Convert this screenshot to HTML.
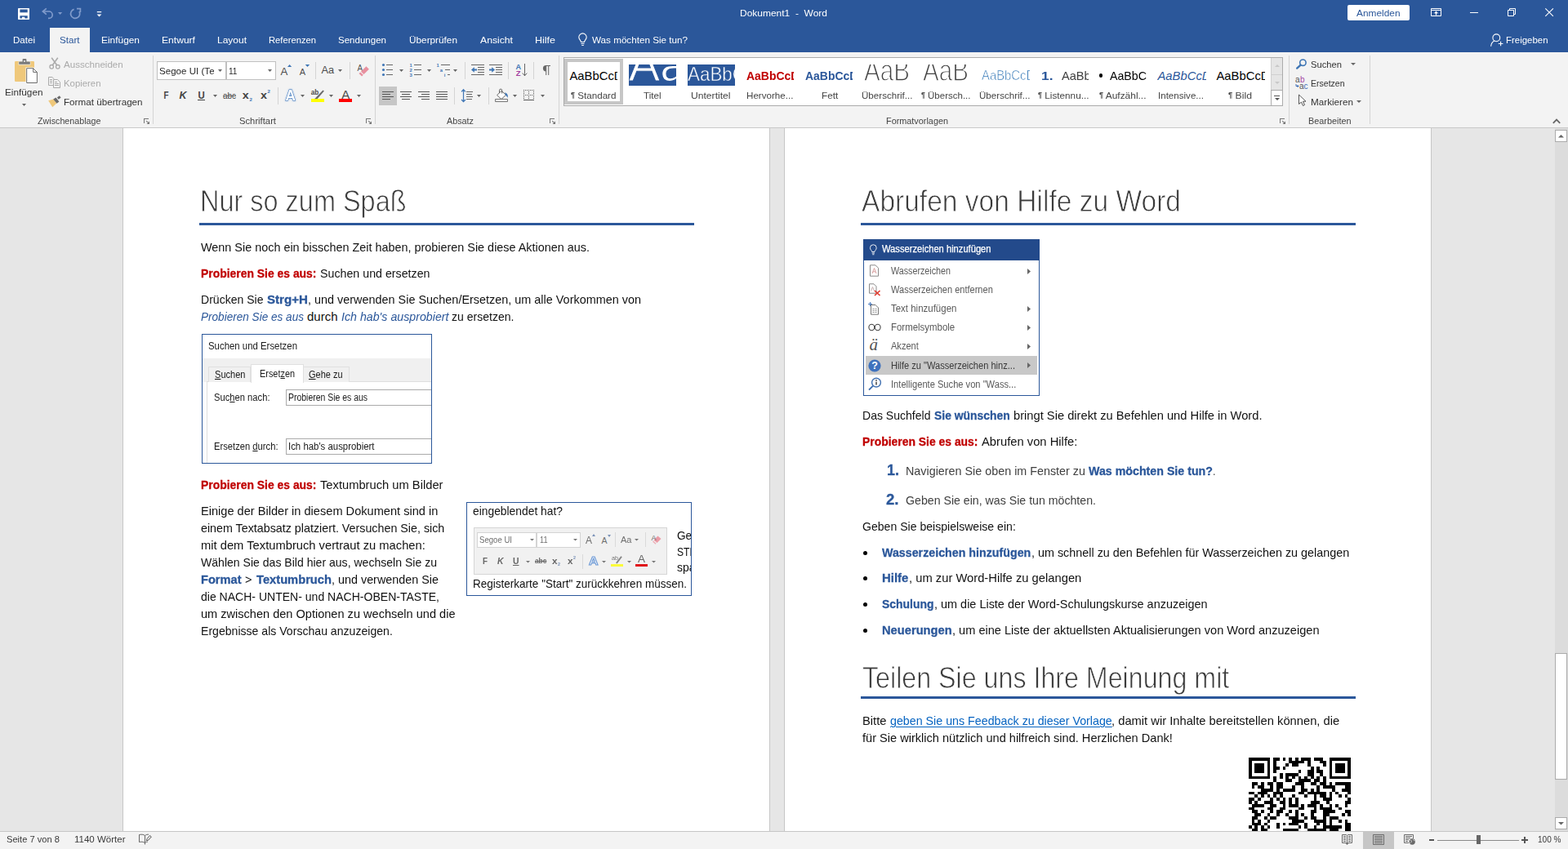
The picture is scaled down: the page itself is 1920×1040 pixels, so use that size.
<!DOCTYPE html>
<html lang="de"><head><meta charset="utf-8"><title>Dokument1 - Word</title>
<style>
html,body{margin:0;padding:0}
body{width:1920px;height:1040px;overflow:hidden;position:relative;background:#E6E6E6;font-family:"Liberation Sans",sans-serif;font-size:12px;color:#444}
.b{position:absolute;box-sizing:border-box}
.t{position:absolute;white-space:nowrap;transform-origin:0 0;color:#444}
.w{color:#fff}
svg{position:absolute;overflow:visible}
.clip{position:absolute;overflow:hidden}
</style></head>
<body>
<div class="b" style="left:0px;top:0px;width:1920px;height:64px;background:#2B579A;"></div>
<div class="b" style="left:61px;top:34px;width:49px;height:30px;background:#F3F3F3;"></div>
<div class="b" style="left:0px;top:64px;width:1920px;height:93px;background:#F3F3F3;border-bottom:1px solid #C9C9C9;"></div>
<svg style="left:0;top:0" width="1920" height="160" viewBox="0 0 1920 160"><rect x="22" y="10" width="14" height="14" rx="0.7" fill="#fff"/><rect x="24.4" y="11.5" width="9.3" height="3.8" fill="#2B579A"/><path d="M24.4 19.3h9.3v3.3h-3.4v-1.9h-3.4v1.9h-2.5z" fill="#2B579A"/><path d="M52.6 14h7.4a4.2 4.2 0 0 1 0 8.4h-1" fill="none" stroke="#809BCB" stroke-width="1.7"/><path d="M56.8 10.4l-4.4 3.6l4.4 3.6" fill="none" stroke="#809BCB" stroke-width="1.7"/><path d="M71 15h5.2l-2.6 3z" fill="#809BCB"/><path d="M90.6 11.4a5.6 5.6 0 1 0 6.4 2.6" fill="none" stroke="#809BCB" stroke-width="1.7"/><path d="M94 10.6h4.4v4.4" fill="none" stroke="#809BCB" stroke-width="1.7"/><path d="M118.8 14h5.4v1.3h-5.4z M118.6 17.4h5.8l-2.9 3z" fill="#fff"/></svg>
<span class="t" style="top:9px;font-size:11.3px;line-height:14px;color:#fff;left:906.00px;transform:scaleX(1.0607);">Dokument1 &nbsp;-&nbsp; Word</span>
<div class="b" style="left:1650px;top:6px;width:76px;height:19px;background:#fff;border-radius:2px;"></div>
<span class="t" style="top:9px;font-size:11.3px;line-height:14px;color:#2B579A;left:1661.00px;transform:scaleX(1.0516);">Anmelden</span>
<svg style="left:0;top:0" width="1920" height="160" viewBox="0 0 1920 160"><path d="M1752.5 10.5h12v9h-12z M1752.5 12.5h12" fill="none" stroke="#fff" stroke-width="1"/><path d="M1758.5 13.6l2.6 2.6h-1.9v2.3h-1.4v-2.3h-1.9z" fill="#fff"/><rect x="1800" y="15" width="10" height="1" fill="#fff"/><path d="M1846.5 12.5h7v7h-7z M1848.5 12.5v-2h7v7h-2" fill="none" stroke="#fff" stroke-width="1"/><path d="M1892.3 10.3l9.6 9.6M1901.9 10.3l-9.6 9.6" fill="none" stroke="#fff" stroke-width="1.1"/><circle cx="1832.3" cy="46.3" r="4.4" fill="none" stroke="#fff" stroke-width="1.1"/><path d="M1825.6 56.8c0.4-3.6 2-6 4.6-6.8" fill="none" stroke="#fff" stroke-width="1.1"/><path d="M1834.8 53.5h5.6M1837.6 50.7v5.6" fill="none" stroke="#fff" stroke-width="1.1"/></svg>
<span class="t" style="top:42px;font-size:11.3px;line-height:14px;color:#fff;left:16.00px;transform:scaleX(1.0237);">Datei</span>
<span class="t" style="top:42px;font-size:11.3px;line-height:14px;color:#fff;left:124.00px;transform:scaleX(1.0536);">Einfügen</span>
<span class="t" style="top:42px;font-size:11.3px;line-height:14px;color:#fff;left:198.00px;transform:scaleX(1.0701);">Entwurf</span>
<span class="t" style="top:42px;font-size:11.3px;line-height:14px;color:#fff;left:266.00px;transform:scaleX(1.0613);">Layout</span>
<span class="t" style="top:42px;font-size:11.3px;line-height:14px;color:#fff;left:329.00px;transform:scaleX(0.9930);">Referenzen</span>
<span class="t" style="top:42px;font-size:11.3px;line-height:14px;color:#fff;left:414.00px;transform:scaleX(1.0205);">Sendungen</span>
<span class="t" style="top:42px;font-size:11.3px;line-height:14px;color:#fff;left:501.00px;transform:scaleX(1.0437);">Überprüfen</span>
<span class="t" style="top:42px;font-size:11.3px;line-height:14px;color:#fff;left:588.00px;transform:scaleX(1.0797);">Ansicht</span>
<span class="t" style="top:42px;font-size:11.3px;line-height:14px;color:#fff;left:655.00px;transform:scaleX(1.1057);">Hilfe</span>
<span class="t" style="top:42px;font-size:11.3px;line-height:14px;color:#2B579A;left:73.00px;transform:scaleX(1.0269);">Start</span>
<svg style="left:707px;top:40px" width="13" height="17" viewBox="0 0 13 17"><path d="M4.5 11.5C4.5 9.5 1.8 8.6 1.8 5.6A4.7 4.7 0 0 1 11.2 5.6C11.2 8.6 8.5 9.5 8.5 11.5Z" fill="none" stroke="#fff" stroke-width="1.1"/><path d="M4.5 13.5H8.5M5.2 15.5H7.8" stroke="#fff" stroke-width="1.1"/></svg>
<span class="t" style="top:42px;font-size:11.3px;line-height:14px;color:#fff;left:725.00px;transform:scaleX(1.0333);">Was möchten Sie tun?</span>
<span class="t" style="top:42px;font-size:11.3px;line-height:14px;color:#fff;left:1844.00px;transform:scaleX(1.0123);">Freigeben</span>
<div class="b" style="left:187px;top:68px;width:1px;height:84px;background:#D4D4D4;"></div>
<div class="b" style="left:459px;top:68px;width:1px;height:84px;background:#D4D4D4;"></div>
<div class="b" style="left:684px;top:68px;width:1px;height:84px;background:#D4D4D4;"></div>
<div class="b" style="left:1578px;top:68px;width:1px;height:84px;background:#D4D4D4;"></div>
<div class="b" style="left:1677px;top:68px;width:1px;height:84px;background:#D4D4D4;"></div>
<div class="b" style="left:386px;top:76px;width:1px;height:21px;background:#D4D4D4;"></div>
<div class="b" style="left:428px;top:76px;width:1px;height:21px;background:#D4D4D4;"></div>
<div class="b" style="left:340px;top:107px;width:1px;height:21px;background:#D4D4D4;"></div>
<div class="b" style="left:569px;top:76px;width:1px;height:21px;background:#D4D4D4;"></div>
<div class="b" style="left:622px;top:76px;width:1px;height:21px;background:#D4D4D4;"></div>
<div class="b" style="left:653px;top:76px;width:1px;height:21px;background:#D4D4D4;"></div>
<div class="b" style="left:556px;top:107px;width:1px;height:21px;background:#D4D4D4;"></div>
<div class="b" style="left:598px;top:107px;width:1px;height:21px;background:#D4D4D4;"></div>
<span class="t" style="top:141px;font-size:11.3px;line-height:14px;left:46.00px;transform:scaleX(0.9493);">Zwischenablage</span>
<span class="t" style="top:141px;font-size:11.3px;line-height:14px;left:293.00px;transform:scaleX(0.9955);">Schriftart</span>
<span class="t" style="top:141px;font-size:11.3px;line-height:14px;left:547.00px;transform:scaleX(0.9552);">Absatz</span>
<span class="t" style="top:141px;font-size:11.3px;line-height:14px;left:1085.00px;transform:scaleX(0.9605);">Formatvorlagen</span>
<span class="t" style="top:141px;font-size:11.3px;line-height:14px;left:1601.50px;transform:scaleX(0.9605);">Bearbeiten</span>
<svg style="left:176px;top:145px" width="8" height="8" viewBox="0 0 8 8"><path d="M0 0h6v1h-5v5h-1z" fill="#777"/><path d="M3.2 3.2l3 3" stroke="#777" stroke-width="1.1" fill="none"/><path d="M7 3.6v3.4h-3.4z" fill="#777"/></svg>
<svg style="left:448px;top:145px" width="8" height="8" viewBox="0 0 8 8"><path d="M0 0h6v1h-5v5h-1z" fill="#777"/><path d="M3.2 3.2l3 3" stroke="#777" stroke-width="1.1" fill="none"/><path d="M7 3.6v3.4h-3.4z" fill="#777"/></svg>
<svg style="left:673px;top:145px" width="8" height="8" viewBox="0 0 8 8"><path d="M0 0h6v1h-5v5h-1z" fill="#777"/><path d="M3.2 3.2l3 3" stroke="#777" stroke-width="1.1" fill="none"/><path d="M7 3.6v3.4h-3.4z" fill="#777"/></svg>
<svg style="left:1567px;top:145px" width="8" height="8" viewBox="0 0 8 8"><path d="M0 0h6v1h-5v5h-1z" fill="#777"/><path d="M3.2 3.2l3 3" stroke="#777" stroke-width="1.1" fill="none"/><path d="M7 3.6v3.4h-3.4z" fill="#777"/></svg>
<svg style="left:1900.5px;top:144.5px" width="10" height="7" viewBox="0 0 10 7"><path d="M0.8 5.8L5 1.6L9.2 5.8" fill="none" stroke="#666" stroke-width="1.8"/></svg>
<svg style="left:0;top:0" width="1920" height="160" viewBox="0 0 1920 160"><rect x="18" y="75" width="24" height="25" rx="1.2" fill="#EFC87B"/><path d="M22.6 79.4v-3.4a0.8 0.8 0 0 1 0.8-0.8h3.8v-2.2a1 1 0 0 1 1-1h3.6a1 1 0 0 1 1 1v2.2h3.8a0.8 0.8 0 0 1 0.8 0.8v3.4z" fill="#F3F3F3"/><path d="M23.2 78.8v-2.8a0.6 0.6 0 0 1 0.6-0.6h3.8v-2.4a0.9 0.9 0 0 1 0.9-0.9h3a0.9 0.9 0 0 1 0.9 0.9v2.4h3.8a0.6 0.6 0 0 1 0.6 0.6v2.8z" fill="#7A7A7A"/><circle cx="30" cy="75" r="1" fill="#F3F3F3"/><path d="M31.5 82.5h9.6l5.4 5.4v14.6h-15z" fill="#fff"/><path d="M32.7 83.7h8l4.7 4.7v13.1h-12.7z" fill="#fff" stroke="#6A6A6A" stroke-width="1"/><path d="M40.7 83.7v4.7h4.7" fill="none" stroke="#6A6A6A" stroke-width="1"/><path d="M27 127h5l-2.5 3z" fill="#666"/><path d="M63.2 70.8l6.6 9.2M70.8 70.8l-6.6 9.2" stroke="#ABABAB" stroke-width="1.6" fill="none"/><circle cx="63.2" cy="81.8" r="2.3" fill="none" stroke="#ABABAB" stroke-width="1.3"/><circle cx="70.8" cy="81.8" r="2.3" fill="none" stroke="#ABABAB" stroke-width="1.3"/><path d="M65.5 104.5h-6v-10h4.4l2.6 2.6" fill="none" stroke="#ABABAB" stroke-width="1"/><path d="M65.5 97.5h5l3 3v7h-8z" fill="#F3F3F3" stroke="#ABABAB" stroke-width="1"/><path d="M61 97.5h3M61 99.5h3M61 101.5h3M67 102.5h5M67 104.5h5M67 100.5h3" stroke="#ABABAB" stroke-width="1" fill="none"/><path d="M59.2 123.2l6.2-1.6l4 5l-5.2 4.6z" fill="#EFC87B"/><path d="M65.2 121.4l3.2-2l4 5l-2.8 2.4z" fill="#6A6A6A"/><path d="M69.8 119.4l3-2.2l1.8 2.2l-2.8 2.4z" fill="#6A6A6A"/></svg>
<span class="t" style="top:106px;font-size:11.3px;line-height:14px;color:#333;left:6.00px;transform:scaleX(1.0424);">Einfügen</span>
<span class="t" style="top:72px;font-size:11.3px;line-height:14px;color:#ABABAB;left:78.30px;transform:scaleX(1.0242);">Ausschneiden</span>
<span class="t" style="top:95px;font-size:11.3px;line-height:14px;color:#ABABAB;left:78.30px;transform:scaleX(1.0059);">Kopieren</span>
<span class="t" style="top:118px;font-size:11.3px;line-height:14px;color:#333;left:78.30px;transform:scaleX(1.0325);">Format übertragen</span>
<div class="b" style="left:192px;top:75px;width:85px;height:23px;background:#fff;border:1px solid #C0C0C0;"></div>
<div class="b" style="left:277px;top:75px;width:61px;height:23px;background:#fff;border:1px solid #C0C0C0;"></div>
<div class="clip" style="left:193px;top:76px;width:69.4px;height:21px">
<span class="t" style="top:4px;font-size:11.3px;line-height:14px;color:#262626;left:2.00px;transform:scaleX(1.0252);">Segoe UI (Textkörper)</span>
</div>
<svg style="left:267px;top:85px" width="5" height="3" viewBox="0 0 5 3"><path d="M0 0H5L2.5 3Z" fill="#666"/></svg>
<span class="t" style="top:80px;font-size:11.3px;line-height:14px;color:#262626;left:280.30px;transform:scaleX(0.8948);">11</span>
<svg style="left:328px;top:85px" width="5" height="3" viewBox="0 0 5 3"><path d="M0 0H5L2.5 3Z" fill="#666"/></svg>
<svg style="left:0;top:0" width="1920" height="160" viewBox="0 0 1920 160"><text x="343.6" y="92" font-size="13.2" font-weight="normal" fill="#4d4d4d" font-family="Liberation Sans, sans-serif" >A</text><path d="M352 82l2.6-3l2.6 3z" fill="#3F76B5"/><text x="366.7" y="92" font-size="11" font-weight="normal" fill="#4d4d4d" font-family="Liberation Sans, sans-serif" >A</text><path d="M373.8 79h5.4l-2.7 3z" fill="#3F76B5"/><text x="393.6" y="90" font-size="12" font-weight="normal" fill="#4d4d4d" font-family="Liberation Sans, sans-serif" textLength="15.6" lengthAdjust="spacingAndGlyphs">Aa</text><path d="M414 85h5l-2.5 3z" fill="#666"/><text x="437.6" y="87" font-size="11.2" font-weight="normal" fill="#555" font-family="Liberation Sans, sans-serif" textLength="6.6" lengthAdjust="spacingAndGlyphs">A</text><path d="M448.4 81.3l3.5 3.4l-6.4 6.4l-3.5-3.4z" fill="#E8909F"/><path d="M441.3 88.4l3.5 3.4l-1.7 1.7l-3.6-3.4z" fill="#E8909F"/><text x="200.4" y="121" font-size="12.5" font-weight="bold" fill="#444" font-family="Liberation Sans, sans-serif" textLength="6" lengthAdjust="spacingAndGlyphs">F</text><text x="219.6" y="121" font-size="12.5" font-weight="bold" fill="#444" font-family="Liberation Sans, sans-serif" font-style="italic" textLength="9" lengthAdjust="spacingAndGlyphs">K</text><text x="242.4" y="121" font-size="12.5" font-weight="bold" fill="#444" font-family="Liberation Sans, sans-serif" textLength="8.2" lengthAdjust="spacingAndGlyphs">U</text><rect x="242" y="122" width="9" height="1" fill="#444"/><path d="M261 116h5l-2.5 3z" fill="#666"/><text x="273" y="121" font-size="11.5" font-weight="normal" fill="#444" font-family="Liberation Sans, sans-serif" textLength="16" lengthAdjust="spacingAndGlyphs">abc</text><rect x="273" y="117" width="16" height="1" fill="#666"/><text x="296.8" y="121" font-size="13.5" font-weight="bold" fill="#444" font-family="Liberation Sans, sans-serif" textLength="8" lengthAdjust="spacingAndGlyphs">x</text><text x="305.6" y="123.6" font-size="6" font-weight="bold" fill="#3F76B5" font-family="Liberation Sans, sans-serif" >2</text><text x="319" y="121" font-size="13.5" font-weight="bold" fill="#444" font-family="Liberation Sans, sans-serif" textLength="8" lengthAdjust="spacingAndGlyphs">x</text><text x="327.6" y="114.4" font-size="6" font-weight="bold" fill="#3F76B5" font-family="Liberation Sans, sans-serif" >2</text><text x="349.6" y="123" font-size="18.5" font-weight="bold" fill="#fff" stroke="#3F76B5" stroke-width="1.1" font-family="Liberation Sans, sans-serif" textLength="12.4" lengthAdjust="spacingAndGlyphs" style="paint-order:stroke fill;filter:drop-shadow(0 0 0.8px #8FB4E6)">A</text><path d="M368 116h5l-2.5 3z" fill="#666"/><rect x="381" y="121" width="16" height="4" fill="#FFFF00"/><text x="380.8" y="115.8" font-size="9.5" font-weight="bold" fill="#4d4d4d" font-family="Liberation Sans, sans-serif" textLength="9.6" lengthAdjust="spacingAndGlyphs">ab</text><path d="M395.4 110.4l1.5 1.1l-8.2 9.4l-3.6 0.3z" fill="#6a6a6a"/><path d="M403 116h5l-2.5 3z" fill="#666"/><rect x="415" y="121" width="16" height="4" fill="#FF0000"/><text x="418.2" y="121" font-size="14" font-weight="normal" fill="#4d4d4d" font-family="Liberation Sans, sans-serif" textLength="10" lengthAdjust="spacingAndGlyphs">A</text><path d="M437 116h5l-2.5 3z" fill="#666"/></svg>
<div class="b" style="left:464px;top:106px;width:22px;height:23px;background:#C6C6C6;"></div>
<svg style="left:0;top:0" width="1920" height="160" viewBox="0 0 1920 160"><circle cx="469.5" cy="79.5" r="1.6" fill="#3F76B5"/><rect x="473" y="79" width="8" height="1" fill="#666"/><circle cx="469.5" cy="85.5" r="1.6" fill="#3F76B5"/><rect x="473" y="85" width="8" height="1" fill="#666"/><circle cx="469.5" cy="91.5" r="1.6" fill="#3F76B5"/><rect x="473" y="91" width="8" height="1" fill="#666"/><path d="M489 85h5l-2.5 3z" fill="#666"/><text x="501.6" y="81.6" font-size="5.8" font-weight="bold" fill="#3F76B5" font-family="Liberation Sans, sans-serif" >1</text><rect x="507" y="79" width="9" height="1" fill="#666"/><text x="501.6" y="87.6" font-size="5.8" font-weight="bold" fill="#3F76B5" font-family="Liberation Sans, sans-serif" >2</text><rect x="507" y="85" width="9" height="1" fill="#666"/><text x="501.6" y="93.6" font-size="5.8" font-weight="bold" fill="#3F76B5" font-family="Liberation Sans, sans-serif" >3</text><rect x="507" y="91" width="9" height="1" fill="#666"/><path d="M523 85h5l-2.5 3z" fill="#666"/><text x="534.6" y="81.6" font-size="5.8" font-weight="bold" fill="#3F76B5" font-family="Liberation Sans, sans-serif" >1</text><rect x="540" y="79" width="11" height="1" fill="#666"/><text x="538.8" y="87.6" font-size="5.8" font-weight="bold" fill="#3F76B5" font-family="Liberation Sans, sans-serif" >a</text><rect x="545" y="85" width="6" height="1" fill="#666"/><text x="543.8" y="93.6" font-size="5.8" font-weight="bold" fill="#3F76B5" font-family="Liberation Sans, sans-serif" >i</text><rect x="548" y="91" width="3" height="1" fill="#666"/><path d="M555 85h5l-2.5 3z" fill="#666"/><rect x="577" y="79" width="16" height="1" fill="#666"/><rect x="577" y="91" width="16" height="1" fill="#666"/><rect x="585" y="82" width="8" height="1" fill="#666"/><rect x="585" y="85" width="8" height="1" fill="#666"/><rect x="585" y="88" width="8" height="1" fill="#666"/><path d="M584 84.6h-3.2v-2.4l-3.8 3.3l3.8 3.3v-2.4h3.2z" fill="#3F76B5"/><rect x="599" y="79" width="16" height="1" fill="#666"/><rect x="599" y="91" width="16" height="1" fill="#666"/><rect x="607" y="82" width="8" height="1" fill="#666"/><rect x="607" y="85" width="8" height="1" fill="#666"/><rect x="607" y="88" width="8" height="1" fill="#666"/><path d="M599 84.6h3.2v-2.4l3.8 3.3l-3.8 3.3v-2.4h-3.2z" fill="#3F76B5"/><text x="631.5" y="85" font-size="9.5" font-weight="bold" fill="#3F76B5" font-family="Liberation Sans, sans-serif" textLength="6.6" lengthAdjust="spacingAndGlyphs">A</text><text x="631.7" y="93" font-size="9.5" font-weight="bold" fill="#A33FA0" font-family="Liberation Sans, sans-serif" textLength="5.8" lengthAdjust="spacingAndGlyphs">Z</text><rect x="642" y="78" width="1" height="15" fill="#666"/><path d="M639.7 89.6l2.8 3.2l2.8-3.2" fill="none" stroke="#666" stroke-width="1"/><path d="M668.6 80A3.7 3.7 0 0 0 668.6 87.4z" fill="#666"/><rect x="668" y="80" width="6" height="1" fill="#666"/><rect x="668.2" y="80" width="1" height="12" fill="#666"/><rect x="671.2" y="80" width="1" height="12" fill="#666"/><rect x="468" y="112" width="14" height="1" fill="#555"/><rect x="468" y="115" width="10" height="1" fill="#555"/><rect x="468" y="118" width="14" height="1" fill="#555"/><rect x="468" y="121" width="10" height="1" fill="#555"/><rect x="490" y="112" width="14" height="1" fill="#555"/><rect x="492" y="115" width="10" height="1" fill="#555"/><rect x="490" y="118" width="14" height="1" fill="#555"/><rect x="492" y="121" width="10" height="1" fill="#555"/><rect x="512" y="112" width="14" height="1" fill="#555"/><rect x="516" y="115" width="10" height="1" fill="#555"/><rect x="512" y="118" width="14" height="1" fill="#555"/><rect x="516" y="121" width="10" height="1" fill="#555"/><rect x="534" y="112" width="14" height="1" fill="#555"/><rect x="534" y="115" width="14" height="1" fill="#555"/><rect x="534" y="118" width="14" height="1" fill="#555"/><rect x="534" y="121" width="14" height="1" fill="#555"/><rect x="571" y="112" width="8" height="1" fill="#666"/><rect x="571" y="115" width="7" height="1" fill="#666"/><rect x="571" y="118" width="8" height="1" fill="#666"/><rect x="571" y="121" width="7" height="1" fill="#666"/><path d="M567.5 110V124.4" stroke="#3F76B5" stroke-width="1.2" fill="none"/><path d="M565.1 112.4l2.4-2.6l2.4 2.6M565.1 122l2.4 2.6l2.4-2.6" stroke="#3F76B5" stroke-width="1.3" fill="none"/><path d="M584 116h5l-2.5 3z" fill="#666"/><path d="M606.5 121.5h15v3h-15z" fill="#fff" stroke="#777" stroke-width="1"/><path d="M608.6 116.5l5.6-5.2l5.3 5l-5.6 5.2z" fill="#fff" stroke="#666" stroke-width="1"/><path d="M611.5 114v-3.3a1.6 1.6 0 0 1 3.2 0v3.8" fill="none" stroke="#666" stroke-width="1"/><path d="M618.2 113.2c3 0.8 4.4 3.5 3.3 6.8c-0.6-1.6-1.4-2.6-2.6-3.4z" fill="#3F76B5"/><path d="M628 116h5l-2.5 3z" fill="#666"/><rect x="641" y="110" width="1" height="1" fill="#555"/><rect x="641" y="116" width="1" height="1" fill="#555"/><rect x="643" y="110" width="1" height="1" fill="#555"/><rect x="643" y="116" width="1" height="1" fill="#555"/><rect x="645" y="110" width="1" height="1" fill="#555"/><rect x="645" y="116" width="1" height="1" fill="#555"/><rect x="647" y="110" width="1" height="1" fill="#555"/><rect x="647" y="116" width="1" height="1" fill="#555"/><rect x="649" y="110" width="1" height="1" fill="#555"/><rect x="649" y="116" width="1" height="1" fill="#555"/><rect x="651" y="110" width="1" height="1" fill="#555"/><rect x="651" y="116" width="1" height="1" fill="#555"/><rect x="653" y="110" width="1" height="1" fill="#555"/><rect x="653" y="116" width="1" height="1" fill="#555"/><rect x="641" y="110" width="1" height="1" fill="#555"/><rect x="647" y="110" width="1" height="1" fill="#555"/><rect x="653" y="110" width="1" height="1" fill="#555"/><rect x="641" y="112" width="1" height="1" fill="#555"/><rect x="647" y="112" width="1" height="1" fill="#555"/><rect x="653" y="112" width="1" height="1" fill="#555"/><rect x="641" y="114" width="1" height="1" fill="#555"/><rect x="647" y="114" width="1" height="1" fill="#555"/><rect x="653" y="114" width="1" height="1" fill="#555"/><rect x="641" y="116" width="1" height="1" fill="#555"/><rect x="647" y="116" width="1" height="1" fill="#555"/><rect x="653" y="116" width="1" height="1" fill="#555"/><rect x="641" y="118" width="1" height="1" fill="#555"/><rect x="647" y="118" width="1" height="1" fill="#555"/><rect x="653" y="118" width="1" height="1" fill="#555"/><rect x="641" y="120" width="1" height="1" fill="#555"/><rect x="647" y="120" width="1" height="1" fill="#555"/><rect x="653" y="120" width="1" height="1" fill="#555"/><rect x="641" y="122" width="13" height="1" fill="#555"/><path d="M662 116h5l-2.5 3z" fill="#666"/></svg>
<div class="b" style="left:690px;top:70px;width:881px;height:60px;background:#fff;border:1px solid #ABABAB;"></div>
<div class="b" style="left:691px;top:72px;width:72px;height:56px;background:#fff;border:4px solid #C6C6C6;"></div>
<div class="b" style="left:1556px;top:71px;width:14px;height:21px;background:#E5E5E5;border-left:1px solid #D0D0D0;border-bottom:1px solid #D0D0D0;"></div>
<div class="b" style="left:1556px;top:92px;width:14px;height:19px;background:#E5E5E5;border-left:1px solid #D0D0D0;border-bottom:1px solid #D0D0D0;"></div>
<div class="b" style="left:1556px;top:110px;width:14px;height:19px;background:#fff;border-left:1px solid #ABABAB;border-top:1px solid #ABABAB;"></div>
<svg style="left:1560.5px;top:79px" width="6" height="3" viewBox="0 0 6 3"><path d="M0 3H6L3.0 0Z" fill="#C8C8C8"/></svg>
<svg style="left:1560.5px;top:100px" width="6" height="3" viewBox="0 0 6 3"><path d="M0 0H6L3.0 3Z" fill="#C8C8C8"/></svg>
<div class="b" style="left:1560px;top:116.5px;width:7px;height:1px;background:#555;"></div>
<svg style="left:1560.5px;top:120px" width="6" height="3" viewBox="0 0 6 3"><path d="M0 0H6L3.0 3Z" fill="#555"/></svg>
<div class="clip" style="left:697px;top:79px;width:59.3px;height:26px">
<span class="t" style="top:5px;font-size:14.8px;line-height:18px;color:#000;left:0.50px;">AaBbCcDd</span>
</div>
<span class="t" style="top:110px;font-size:11.3px;line-height:14px;left:698.55px;transform:scaleX(1.0320);"><span style="font-size:8.6px;font-weight:bold;position:relative;top:-1.7px">¶</span> Standard</span>
<div class="b" style="left:770px;top:79px;width:58px;height:26px;background:#2B579A;"></div>
<div class="clip" style="left:770px;top:79px;width:58px;height:26px">
<span class="t" style="top:-33px;font-size:58px;line-height:66px;color:#fff;-webkit-text-stroke:1.1px #2B579A;letter-spacing:0px;left:-0.50px;">Aa</span>
</div>
<span class="t" style="top:110px;font-size:11.3px;line-height:14px;left:787.55px;transform:scaleX(1.0269);">Titel</span>
<div class="b" style="left:842px;top:79px;width:58px;height:26px;background:#2B579A;"></div>
<div class="clip" style="left:842px;top:79px;width:58px;height:26px">
<span class="t" style="top:-3px;font-size:24px;line-height:29px;color:#fff;-webkit-text-stroke:0.5px #2B579A;left:0.00px;transform:scaleX(0.9336);">AaBbC</span>
</div>
<span class="t" style="top:110px;font-size:11.3px;line-height:14px;left:846.05px;transform:scaleX(1.0726);">Untertitel</span>
<div class="clip" style="left:913px;top:79px;width:59px;height:26px">
<span class="t" style="top:5px;font-size:14.8px;line-height:18px;color:#C00000;font-weight:bold;left:0.50px;transform:scaleX(0.9434);">AaBbCcDd</span>
</div>
<span class="t" style="top:110px;font-size:11.3px;line-height:14px;left:913.55px;transform:scaleX(1.0288);">Hervorhe...</span>
<div class="clip" style="left:985px;top:79px;width:59px;height:26px">
<span class="t" style="top:5px;font-size:14.8px;line-height:18px;color:#2B579A;font-weight:bold;left:0.50px;transform:scaleX(0.9434);">AaBbCcDd</span>
</div>
<span class="t" style="top:110px;font-size:11.3px;line-height:14px;left:1005.75px;transform:scaleX(1.0427);">Fett</span>
<div class="clip" style="left:1057px;top:79px;width:59px;height:26px">
<span class="t" style="top:-14px;font-size:36px;line-height:43px;color:#404040;-webkit-text-stroke:1.3px #fff;left:0.50px;transform:scaleX(0.8230);">AaB</span>
</div>
<span class="t" style="top:110px;font-size:11.3px;line-height:14px;left:1055.05px;transform:scaleX(1.0262);">Überschrif...</span>
<div class="clip" style="left:1129px;top:79px;width:59px;height:26px">
<span class="t" style="top:-14px;font-size:36px;line-height:43px;color:#404040;-webkit-text-stroke:1.3px #fff;left:0.50px;transform:scaleX(0.8230);">AaB</span>
</div>
<span class="t" style="top:110px;font-size:11.3px;line-height:14px;left:1128.05px;transform:scaleX(1.0184);"><span style="font-size:8.6px;font-weight:bold;position:relative;top:-1.7px">¶</span> Übersch...</span>
<div class="clip" style="left:1201px;top:79px;width:60px;height:26px">
<span class="t" style="top:4px;font-size:15.6px;line-height:19px;color:#2E74B5;-webkit-text-stroke:0.5px #fff;left:0.70px;transform:scaleX(0.9527);">AaBbCcDd</span>
</div>
<span class="t" style="top:110px;font-size:11.3px;line-height:14px;left:1199.05px;transform:scaleX(1.0262);">Überschrif...</span>
<span class="t" style="top:83px;font-size:15.5px;line-height:19px;color:#2B579A;font-weight:bold;left:1274.50px;transform:scaleX(1.1208);">1.</span>
<div class="clip" style="left:1299px;top:79px;width:33.5px;height:26px">
<span class="t" style="top:5px;font-size:14.8px;line-height:18px;color:#404040;left:0.70px;transform:scaleX(0.9865);">AaBbCc</span>
</div>
<span class="t" style="top:110px;font-size:11.3px;line-height:14px;left:1271.05px;transform:scaleX(1.0409);"><span style="font-size:8.6px;font-weight:bold;position:relative;top:-1.7px">¶</span> Listennu...</span>
<div class="b" style="left:1345.5px;top:90px;width:4.6px;height:4.6px;background:#000;border-radius:50%;"></div>
<span class="t" style="top:84px;font-size:14.8px;line-height:18px;color:#000;left:1359.00px;transform:scaleX(0.9597);">AaBbC</span>
<span class="t" style="top:110px;font-size:11.3px;line-height:14px;left:1345.55px;transform:scaleX(1.0569);"><span style="font-size:8.6px;font-weight:bold;position:relative;top:-1.7px">¶</span> Aufzähl...</span>
<div class="clip" style="left:1417px;top:79px;width:59.5px;height:26px">
<span class="t" style="top:5px;font-size:14.8px;line-height:18px;color:#2B579A;font-style:italic;left:0.50px;">AaBbCcDd</span>
</div>
<span class="t" style="top:110px;font-size:11.3px;line-height:14px;left:1418.30px;transform:scaleX(1.0249);">Intensive...</span>
<div class="clip" style="left:1489px;top:79px;width:59.5px;height:26px">
<span class="t" style="top:5px;font-size:14.8px;line-height:18px;color:#000;left:0.50px;">AaBbCcDd</span>
</div>
<span class="t" style="top:110px;font-size:11.3px;line-height:14px;left:1503.80px;transform:scaleX(1.0835);"><span style="font-size:8.6px;font-weight:bold;position:relative;top:-1.7px">¶</span> Bild</span>
<svg style="left:0;top:0" width="1920" height="160" viewBox="0 0 1920 160"><circle cx="1595.4" cy="76.7" r="3.7" fill="none" stroke="#3F76B5" stroke-width="1.6"/><path d="M1592.6 79.6l-4.4 4" stroke="#3F76B5" stroke-width="2.4" stroke-linecap="round" fill="none"/></svg>
<span class="t" style="top:72px;font-size:11.3px;line-height:14px;color:#333;left:1605.40px;transform:scaleX(0.9914);">Suchen</span>
<svg style="left:1653.5px;top:77px" width="6" height="3" viewBox="0 0 6 3"><path d="M0 0H6L3.0 3Z" fill="#666"/></svg>
<span class="t" style="left:1586px;top:93px;font-size:10px;line-height:10px;color:#555">a</span><span class="t" style="left:1592px;top:93px;font-size:10px;line-height:10px;color:#A349A4">b</span><span class="t" style="left:1591px;top:100.5px;font-size:10px;line-height:10px;color:#555">a</span><span class="t" style="left:1596.5px;top:100.5px;font-size:10px;line-height:10px;color:#3E6DB5">c</span><svg style="left:1586px;top:103px" width="5" height="5" viewBox="0 0 5 5"><path d="M1 0V2.5H4M2.5 1L4 2.5L2.5 4" fill="none" stroke="#3E6DB5" stroke-width="1"/></svg>
<span class="t" style="top:95px;font-size:11.3px;line-height:14px;color:#333;left:1605.40px;transform:scaleX(0.9329);">Ersetzen</span>
<svg style="left:1589px;top:115px" width="11" height="16" viewBox="0 0 11 16"><path d="M1.5 1V12.5L4.5 10L6.5 14.5L8.5 13.5L6.5 9.2H10Z" fill="#fff" stroke="#555" stroke-width="1" stroke-linejoin="round"/></svg>
<span class="t" style="top:118px;font-size:11.3px;line-height:14px;color:#333;left:1605.40px;transform:scaleX(1.0351);">Markieren</span>
<svg style="left:1660.5px;top:123px" width="6" height="3" viewBox="0 0 6 3"><path d="M0 0H6L3.0 3Z" fill="#666"/></svg>
<div class="b" style="left:0px;top:1018px;width:1920px;height:22px;background:#F3F3F3;border-top:1px solid #C6C6C6;"></div>
<span class="t" style="top:1021px;font-size:11.3px;line-height:14px;color:#3a3a3a;left:8.20px;transform:scaleX(0.9855);">Seite 7 von 8</span>
<span class="t" style="top:1021px;font-size:11.3px;line-height:14px;color:#3a3a3a;left:90.50px;transform:scaleX(1.0191);">1140 Wörter</span>
<svg style="left:170px;top:1021px" width="16" height="14" viewBox="0 0 16 14"><path d="M7.5 2.5V11.5M7.5 2.5C5.5 1 3 1 0.5 1.5V10.5C3 10 5.5 10 7.5 11.5C9 10.3 10 10.2 11 10.2" fill="none" stroke="#666"/><path d="M7.5 2.5C9 1.3 10.5 1.2 12 1.2" fill="none" stroke="#666"/><path d="M7.5 11.5V13.5" stroke="#666"/><path d="M9.5 9L10 6.5L13.5 2.5L15.3 4L11.8 8Z" fill="#F3F3F3" stroke="#555"/></svg>
<div class="b" style="left:1669px;top:1019px;width:38px;height:21px;background:#C6C6C6;"></div>
<svg style="left:0;top:0" width="1920" height="1040" viewBox="0 0 1920 1040"><path d="M1643.5 1022.5h5l1 1l1-1h5v10h-5l-1 1l-1-1h-5z" fill="#F3F3F3" stroke="#6A6A6A" stroke-width="1"/><rect x="1649" y="1023" width="1" height="11" fill="#6A6A6A"/><path d="M1647.6 1033l1.9 2l1.9-2z" fill="#6A6A6A"/><rect x="1645" y="1024" width="3" height="1" fill="#6A6A6A"/><rect x="1651" y="1024" width="3" height="1" fill="#6A6A6A"/><rect x="1645" y="1026" width="3" height="1" fill="#6A6A6A"/><rect x="1651" y="1026" width="3" height="1" fill="#6A6A6A"/><rect x="1645" y="1028" width="3" height="1" fill="#6A6A6A"/><rect x="1651" y="1028" width="3" height="1" fill="#6A6A6A"/><rect x="1645" y="1030" width="3" height="1" fill="#6A6A6A"/><rect x="1651" y="1030" width="3" height="1" fill="#6A6A6A"/><path d="M1681.5 1022.5h13v12h-13z" fill="none" stroke="#6A6A6A" stroke-width="1"/><rect x="1683" y="1024" width="10" height="1" fill="#6A6A6A"/><rect x="1683" y="1026" width="10" height="1" fill="#6A6A6A"/><rect x="1683" y="1028" width="10" height="1" fill="#6A6A6A"/><rect x="1683" y="1030" width="10" height="1" fill="#6A6A6A"/><rect x="1683" y="1032" width="10" height="1" fill="#6A6A6A"/><path d="M1725 1032.5h-5.5v-10h11v5" fill="none" stroke="#6A6A6A" stroke-width="1"/><rect x="1721" y="1024" width="8" height="1" fill="#6A6A6A"/><rect x="1721" y="1026" width="6" height="1" fill="#6A6A6A"/><rect x="1721" y="1028" width="4" height="1" fill="#6A6A6A"/><rect x="1721" y="1030" width="3" height="1" fill="#6A6A6A"/><circle cx="1729.2" cy="1031" r="3.7" fill="#6A6A6A"/><path d="M1726.6 1029.4c1.6-0.6 2.2 0.6 1.6 2c-0.4 1-1.4 0.8-1.8 1.8M1730.4 1028.2c0 1.2 1.2 1.8 2.2 1.4" fill="none" stroke="#D8D8D8" stroke-width="1"/><rect x="1750" y="1028" width="6" height="2" fill="#555"/><rect x="1760" y="1029" width="100" height="1" fill="#8A8A8A"/><rect x="1808" y="1023" width="5" height="11" fill="#666"/><rect x="1863" y="1028" width="8" height="2" fill="#555"/><rect x="1866" y="1025" width="2" height="8" fill="#555"/></svg>
<span class="t" style="top:1021px;font-size:11.3px;line-height:14px;color:#3a3a3a;left:1883.00px;transform:scaleX(0.8893);">100 %</span>
<div class="b" style="left:150px;top:157px;width:793px;height:861px;background:#fff;border-left:1px solid #C6C6C6;border-right:1px solid #C6C6C6;"></div>
<div class="b" style="left:960px;top:157px;width:793px;height:861px;background:#fff;border-left:1px solid #C6C6C6;border-right:1px solid #C6C6C6;"></div>
<div class="b" style="left:1904px;top:157px;width:16px;height:861px;background:#DCDCDC;"></div>
<div class="b" style="left:1904px;top:159px;width:15px;height:15px;background:#fff;border:1px solid #ABABAB;"></div>
<svg style="left:1908px;top:165px" width="7" height="3.5" viewBox="0 0 7 3.5"><path d="M0 3.5H7L3.5 0Z" fill="#666"/></svg>
<div class="b" style="left:1904px;top:1001px;width:15px;height:15px;background:#fff;border:1px solid #ABABAB;"></div>
<svg style="left:1908px;top:1007px" width="7" height="3.5" viewBox="0 0 7 3.5"><path d="M0 0H7L3.5 3.5Z" fill="#666"/></svg>
<div class="b" style="left:1904px;top:800px;width:15px;height:155px;background:#fff;border:1px solid #ABABAB;"></div>
<span class="t" style="top:225px;font-size:36px;line-height:43px;color:#3b3b3b;-webkit-text-stroke:0.8px #fff;left:245.00px;transform:scaleX(0.9015);">Nur so zum Spaß</span>
<div class="b" style="left:244px;top:273px;width:606px;height:3px;background:#2B579A;"></div>
<span class="t" style="top:293px;font-size:15px;line-height:19px;color:#111;left:246.00px;transform:scaleX(0.9599);">Wenn Sie noch ein bisschen Zeit haben, probieren Sie diese Aktionen aus.</span>
<span class="t" style="top:325px;font-size:15px;line-height:19px;color:#C00000;font-weight:bold;-webkit-text-stroke:0.3px;left:246.00px;transform:scaleX(0.9274);">Probieren Sie es aus:</span>
<span class="t" style="top:325px;font-size:15px;line-height:19px;color:#111;left:392.00px;transform:scaleX(0.9486);">Suchen und ersetzen</span>
<span class="t" style="top:357px;font-size:15px;line-height:19px;color:#111;left:246.00px;transform:scaleX(0.9363);">Drücken Sie</span>
<span class="t" style="top:357px;font-size:15px;line-height:19px;color:#2B579A;font-weight:bold;-webkit-text-stroke:0.3px;left:326.50px;transform:scaleX(1.0082);">Strg+H</span>
<span class="t" style="top:357px;font-size:15px;line-height:19px;color:#111;left:376.50px;transform:scaleX(0.9613);">, und verwenden Sie Suchen/Ersetzen, um alle Vorkommen von</span>
<span class="t" style="top:378px;font-size:15px;line-height:19px;color:#2B579A;font-style:italic;left:246.00px;transform:scaleX(0.9048);">Probieren Sie es aus</span>
<span class="t" style="top:378px;font-size:15px;line-height:19px;color:#111;left:376.00px;">durch</span>
<span class="t" style="top:378px;font-size:15px;line-height:19px;color:#2B579A;font-style:italic;left:417.50px;transform:scaleX(0.9475);">Ich hab's ausprobiert</span>
<span class="t" style="top:378px;font-size:15px;line-height:19px;color:#111;left:552.50px;transform:scaleX(0.9361);">zu ersetzen.</span>
<div class="b" style="left:247px;top:409px;width:282px;height:159px;background:#fff;border:1px solid #2B579A;"></div>
<div class="b" style="left:248px;top:439px;width:280px;height:29px;background:#F0F0F0;"></div>
<div class="b" style="left:253px;top:467px;width:275px;height:1px;background:#DEDEDE;"></div>
<div class="b" style="left:253px;top:468px;width:1px;height:99px;background:#DEDEDE;"></div>
<div class="b" style="left:255px;top:449px;width:52px;height:19px;background:#F0F0F0;border:1px solid #E0E0E0;border-bottom:none;"></div>
<div class="b" style="left:371px;top:449px;width:57px;height:19px;background:#F0F0F0;border:1px solid #E0E0E0;border-bottom:none;border-left:none;"></div>
<div class="b" style="left:307px;top:446px;width:65px;height:23px;background:#fff;border:1px solid #E0E0E0;border-bottom:none;"></div>
<span class="t" style="top:416px;font-size:12px;line-height:16px;color:#1a1a1a;left:255.00px;transform:scaleX(0.9499);">Suchen und Ersetzen</span>
<span class="t" style="top:451px;font-size:12px;line-height:16px;color:#1a1a1a;left:263.00px;transform:scaleX(0.9210);"><u>S</u>uchen</span>
<span class="t" style="top:450px;font-size:12px;line-height:16px;color:#1a1a1a;left:318.00px;transform:scaleX(0.9077);">Erset<u>z</u>en</span>
<span class="t" style="top:451px;font-size:12px;line-height:16px;color:#1a1a1a;left:378.00px;transform:scaleX(0.9146);"><u>G</u>ehe zu</span>
<span class="t" style="top:479px;font-size:12px;line-height:16px;color:#1a1a1a;left:262.30px;transform:scaleX(0.9330);">Suc<u>h</u>en nach:</span>
<div class="b" style="left:350px;top:477px;width:179px;height:20px;background:#fff;border:1px solid #ABABAB;border-right:none;"></div>
<span class="t" style="top:479px;font-size:12px;line-height:16px;color:#1a1a1a;left:352.80px;transform:scaleX(0.8707);">Probieren Sie es aus</span>
<span class="t" style="top:539px;font-size:12px;line-height:16px;color:#1a1a1a;left:262.30px;transform:scaleX(0.9337);">Ersetzen <u>d</u>urch:</span>
<div class="b" style="left:350px;top:537px;width:179px;height:20px;background:#fff;border:1px solid #ABABAB;border-right:none;"></div>
<span class="t" style="top:539px;font-size:12px;line-height:16px;color:#1a1a1a;left:352.80px;transform:scaleX(0.9502);">Ich hab's ausprobiert</span>
<div class="b" style="left:528px;top:409px;width:1px;height:159px;background:#2B579A;"></div>
<span class="t" style="top:584px;font-size:15px;line-height:19px;color:#C00000;font-weight:bold;-webkit-text-stroke:0.3px;left:246.00px;transform:scaleX(0.9274);">Probieren Sie es aus:</span>
<span class="t" style="top:584px;font-size:15px;line-height:19px;color:#111;left:392.00px;transform:scaleX(0.9811);">Textumbruch um Bilder</span>
<span class="t" style="top:616px;font-size:15px;line-height:19px;color:#111;left:246.00px;transform:scaleX(0.9726);">Einige der Bilder in diesem Dokument sind in</span>
<span class="t" style="top:637px;font-size:15px;line-height:19px;color:#111;left:246.00px;transform:scaleX(0.9523);">einem Textabsatz platziert. Versuchen Sie, sich</span>
<span class="t" style="top:658px;font-size:15px;line-height:19px;color:#111;left:246.00px;transform:scaleX(0.9820);">mit dem Textumbruch vertraut zu machen:</span>
<span class="t" style="top:679px;font-size:15px;line-height:19px;color:#111;left:246.00px;transform:scaleX(0.9368);">Wählen Sie das Bild hier aus, wechseln Sie zu</span>
<span class="t" style="top:700px;font-size:15px;line-height:19px;color:#2B579A;font-weight:bold;-webkit-text-stroke:0.3px;left:246.00px;transform:scaleX(0.9736);">Format</span>
<span class="t" style="top:700px;font-size:15px;line-height:19px;color:#111;left:300.00px;transform:scaleX(0.9697);">&gt;</span>
<span class="t" style="top:700px;font-size:15px;line-height:19px;color:#2B579A;font-weight:bold;-webkit-text-stroke:0.3px;left:313.50px;transform:scaleX(0.9797);">Textumbruch</span>
<span class="t" style="top:700px;font-size:15px;line-height:19px;color:#111;left:405.50px;transform:scaleX(0.9578);">, und verwenden Sie</span>
<span class="t" style="top:721px;font-size:15px;line-height:19px;color:#111;left:246.00px;transform:scaleX(0.9351);">die NACH- UNTEN- und NACH-OBEN-TASTE,</span>
<span class="t" style="top:742px;font-size:15px;line-height:19px;color:#111;left:246.00px;transform:scaleX(0.9703);">um zwischen den Optionen zu wechseln und die</span>
<span class="t" style="top:763px;font-size:15px;line-height:19px;color:#111;left:246.00px;transform:scaleX(0.9386);">Ergebnisse als Vorschau anzuzeigen.</span>
<div class="b" style="left:571px;top:615px;width:276px;height:115px;background:#fff;border:1px solid #2B579A;"></div>
<div class="clip" style="left:572px;top:616px;width:274px;height:113px">
<span class="t" style="top:1px;font-size:14.4px;line-height:18px;color:#111;left:6.50px;transform:scaleX(0.9612);">eingeblendet hat?</span>
<span class="t" style="top:90px;font-size:14.4px;line-height:18px;color:#111;left:6.50px;transform:scaleX(0.9392);">Registerkarte "Start" zurückkehren müssen.</span>
<span class="t" style="top:31px;font-size:14.4px;line-height:18px;color:#111;left:257.00px;transform:scaleX(0.9487);">Gehen</span>
<span class="t" style="top:51px;font-size:14.4px;line-height:18px;color:#111;left:257.00px;transform:scaleX(0.8403);">STRG</span>
<span class="t" style="top:70px;font-size:14.4px;line-height:18px;color:#111;left:257.00px;transform:scaleX(0.9724);">sparen</span>
</div>
<div class="b" style="left:579.5px;top:646px;width:237.5px;height:57.5px;background:#F1F1F1;border:1px solid #D6D6D6;"></div>
<div class="b" style="left:584px;top:652px;width:73px;height:19px;background:#fff;border:1px solid #D4D4D4;"></div>
<div class="b" style="left:657px;top:652px;width:54px;height:19px;background:#fff;border:1px solid #D4D4D4;"></div>
<span class="t" style="top:654px;font-size:10.8px;line-height:14px;color:#6E6E6E;left:587.00px;transform:scaleX(0.8883);">Segoe UI</span>
<svg style="left:649px;top:660px" width="5" height="2.5" viewBox="0 0 5 2.5"><path d="M0 0H5L2.5 2.5Z" fill="#777"/></svg>
<span class="t" style="top:654px;font-size:10.8px;line-height:14px;color:#6E6E6E;left:661.00px;transform:scaleX(0.8468);">11</span>
<svg style="left:702px;top:660px" width="5" height="2.5" viewBox="0 0 5 2.5"><path d="M0 0H5L2.5 2.5Z" fill="#777"/></svg>
<span class="t" style="top:654px;font-size:12.5px;line-height:16px;color:#6E6E6E;left:717.00px;transform:scaleX(0.9588);">A</span>
<svg style="left:725px;top:654px" width="4" height="3" viewBox="0 0 4 3"><path d="M0 3H4L2 0Z" fill="#7A92B8"/></svg>
<span class="t" style="top:655px;font-size:10.5px;line-height:14px;color:#6E6E6E;left:736.50px;">A</span>
<svg style="left:744px;top:654.5px" width="4" height="3" viewBox="0 0 4 3"><path d="M0 0H4L2 3Z" fill="#7A92B8"/></svg>
<div class="b" style="left:753px;top:652px;width:1px;height:18px;background:#DADADA;"></div>
<span class="t" style="top:654px;font-size:11.5px;line-height:14px;color:#6E6E6E;left:760.00px;transform:scaleX(0.9589);">Aa</span>
<svg style="left:777px;top:660px" width="5" height="2.5" viewBox="0 0 5 2.5"><path d="M0 0H5L2.5 2.5Z" fill="#777"/></svg>
<div class="b" style="left:790px;top:652px;width:1px;height:18px;background:#DADADA;"></div>
<svg style="left:797px;top:653px" width="14" height="16" viewBox="0 0 14 16"><path d="M8.5 3.5L12.5 7L7.5 12L3.5 8.5Z" fill="#EC9BA6"/><path d="M3 9.5L6.5 12.8L5.6 13.8L2 10.5Z" fill="#EC9BA6" opacity=".8"/></svg>
<span class="t" style="top:653px;font-size:9px;line-height:12px;color:#6E6E6E;left:797.50px;">A</span>
<span class="t" style="top:680px;font-size:10.8px;line-height:14px;color:#666;font-weight:bold;left:591.00px;transform:scaleX(0.9078);">F</span>
<span class="t" style="top:680px;font-size:10.8px;line-height:14px;color:#666;font-weight:bold;font-style:italic;left:608.50px;transform:scaleX(0.9600);">K</span>
<span class="t" style="top:680px;font-size:10.8px;line-height:14px;color:#666;font-weight:bold;text-decoration:underline;left:627.50px;transform:scaleX(0.9600);">U</span>
<svg style="left:643.8px;top:686.5px" width="5" height="2.5" viewBox="0 0 5 2.5"><path d="M0 0H5L2.5 2.5Z" fill="#777"/></svg>
<span class="t" style="top:680px;font-size:9.8px;line-height:13px;color:#666;font-weight:bold;text-decoration:line-through;left:654.50px;transform:scaleX(0.8466);">abc</span>
<span class="t" style="top:680px;font-size:11.5px;line-height:14px;color:#666;font-weight:bold;left:675.50px;transform:scaleX(1.0146);">x</span>
<span class="t" style="top:687px;font-size:5.5px;line-height:8px;color:#7A92B8;font-weight:bold;left:682.50px;transform:scaleX(0.9796);">2</span>
<span class="t" style="top:680px;font-size:11.5px;line-height:14px;color:#666;font-weight:bold;left:694.80px;transform:scaleX(1.0146);">x</span>
<span class="t" style="top:679px;font-size:5.5px;line-height:8px;color:#7A92B8;font-weight:bold;left:701.80px;transform:scaleX(0.9796);">2</span>
<div class="b" style="left:713px;top:679px;width:1px;height:18px;background:#DADADA;"></div>
<span class="t" style="top:677px;font-size:15px;line-height:19px;color:#fff;font-weight:bold;-webkit-text-stroke:1.1px #6F9BD6;left:720.50px;transform:scaleX(1.0605);">A</span>
<svg style="left:736.8px;top:686.5px" width="5" height="2.5" viewBox="0 0 5 2.5"><path d="M0 0H5L2.5 2.5Z" fill="#777"/></svg>
<div class="b" style="left:748px;top:690.5px;width:14.5px;height:3px;background:#FBFB3A;"></div>
<span class="t" style="top:678px;font-size:8px;line-height:11px;color:#777;left:748.50px;transform:scaleX(0.8982);">ab</span>
<svg style="left:748px;top:680px" width="15" height="11" viewBox="0 0 15 11"><path d="M6 9.5L12.3 1.2L13.8 2.3L7.6 10.6Z" fill="#858585"/></svg>
<svg style="left:767.5px;top:686.5px" width="5" height="2.5" viewBox="0 0 5 2.5"><path d="M0 0H5L2.5 2.5Z" fill="#777"/></svg>
<div class="b" style="left:778px;top:690.5px;width:14.5px;height:3px;background:#E0141A;"></div>
<span class="t" style="top:677px;font-size:12.5px;line-height:16px;color:#666;left:780.50px;transform:scaleX(1.0787);">A</span>
<svg style="left:797.5px;top:686.5px" width="5" height="2.5" viewBox="0 0 5 2.5"><path d="M0 0H5L2.5 2.5Z" fill="#777"/></svg>
<span class="t" style="top:225px;font-size:36px;line-height:43px;color:#3b3b3b;-webkit-text-stroke:0.8px #fff;left:1055.00px;transform:scaleX(0.9320);">Abrufen von Hilfe zu Word</span>
<div class="b" style="left:1054px;top:273px;width:606px;height:3px;background:#2B579A;"></div>
<div class="b" style="left:1057px;top:293px;width:216px;height:192px;background:#fff;border:1px solid #2B579A;"></div>
<div class="b" style="left:1057px;top:293px;width:216px;height:25.5px;background:#234A8B;"></div>
<svg style="left:1063.5px;top:298.5px" width="10.7" height="14" viewBox="0 0 13 17"><path d="M4.5 11.5C4.5 9.5 1.8 8.6 1.8 5.6A4.7 4.7 0 0 1 11.2 5.6C11.2 8.6 8.5 9.5 8.5 11.5Z" fill="none" stroke="#fff" stroke-width="1.1"/><path d="M4.5 13.5H8.5M5.2 15.5H7.8" stroke="#fff" stroke-width="1.1"/></svg>
<span class="t" style="top:297px;font-size:12px;line-height:16px;color:#fff;-webkit-text-stroke:0.25px #fff;left:1080.00px;transform:scaleX(0.9294);">Wasserzeichen hinzufügen</span>
<div class="b" style="left:1060px;top:436px;width:210px;height:23px;background:#C8C8C8;"></div>
<span class="t" style="top:324px;font-size:12px;line-height:16px;color:#5A5A5A;left:1090.80px;transform:scaleX(0.8947);">Wasserzeichen</span>
<svg style="left:1257.5px;top:328.5px" width="4" height="7" viewBox="0 0 4 7"><path d="M0 0V7L4 3.5Z" fill="#666"/></svg>
<span class="t" style="top:347px;font-size:12px;line-height:16px;color:#5A5A5A;left:1090.80px;transform:scaleX(0.9201);">Wasserzeichen entfernen</span>
<span class="t" style="top:370px;font-size:12px;line-height:16px;color:#5A5A5A;left:1090.80px;transform:scaleX(0.9564);">Text hinzufügen</span>
<svg style="left:1257.5px;top:374.8px" width="4" height="7" viewBox="0 0 4 7"><path d="M0 0V7L4 3.5Z" fill="#666"/></svg>
<span class="t" style="top:393px;font-size:12px;line-height:16px;color:#5A5A5A;left:1090.80px;transform:scaleX(0.9533);">Formelsymbole</span>
<svg style="left:1257.5px;top:397.8px" width="4" height="7" viewBox="0 0 4 7"><path d="M0 0V7L4 3.5Z" fill="#666"/></svg>
<span class="t" style="top:416px;font-size:12px;line-height:16px;color:#5A5A5A;left:1090.80px;transform:scaleX(0.9213);">Akzent</span>
<svg style="left:1257.5px;top:420.5px" width="4" height="7" viewBox="0 0 4 7"><path d="M0 0V7L4 3.5Z" fill="#666"/></svg>
<span class="t" style="top:440px;font-size:12px;line-height:16px;color:#3A3A3A;left:1090.80px;transform:scaleX(0.9237);">Hilfe zu "Wasserzeichen hinz...</span>
<svg style="left:1257.5px;top:444.3px" width="4" height="7" viewBox="0 0 4 7"><path d="M0 0V7L4 3.5Z" fill="#666"/></svg>
<span class="t" style="top:463px;font-size:12px;line-height:16px;color:#5A5A5A;left:1090.80px;transform:scaleX(0.9278);">Intelligente Suche von "Wass...</span>
<svg style="left:1064px;top:324px" width="13" height="15" viewBox="0 0 13 15"><path d="M1.5 0.8H8L11.5 4.3V14.2H1.5Z" fill="#fff" stroke="#8A8A8A"/><path d="M4 11L6.5 4.5L9 11M5 8.8H8" fill="none" stroke="#D9A0A0" stroke-width="1"/></svg><svg style="left:1063px;top:347px" width="16" height="16" viewBox="0 0 16 16"><path d="M1.5 0.8H7L10 3.8V12.2H1.5Z" fill="#fff" stroke="#8A8A8A"/><path d="M3.5 9.5L5.5 4.5L7.5 9.5" fill="none" stroke="#C9B0B0" stroke-width="1"/><path d="M8 9L14.5 15M14.5 9L8 15" stroke="#E03A2E" stroke-width="1.7"/></svg><svg style="left:1063px;top:370px" width="16" height="16" viewBox="0 0 16 16"><path d="M3.5 3.5H9L12.5 7V15.2H3.5Z" fill="#fff" stroke="#777"/><path d="M5.5 8.5H10.5M5.5 10.5H10.5M5.5 12.5H10.5" stroke="#888" stroke-width="0.9" stroke-dasharray="2 1"/><path d="M2.5 0V5M0 2.5H5" stroke="#4F7EC0" stroke-width="1.2"/></svg><svg style="left:1063px;top:396px" width="16" height="10" viewBox="0 0 16 10"><ellipse cx="4.3" cy="5" rx="3.4" ry="3.7" fill="none" stroke="#444" stroke-width="1.1"/><ellipse cx="11.7" cy="5" rx="3.4" ry="3.7" fill="none" stroke="#444" stroke-width="1.1"/></svg><span class="t" style="left:1064.5px;top:411px;font-size:21px;line-height:22px;font-style:italic;color:#555;font-family:'Liberation Serif',serif">ä</span><svg style="left:1063px;top:439.5px" width="16" height="16" viewBox="0 0 16 16"><circle cx="8" cy="8" r="7.6" fill="#3F72BD"/><text x="8" y="12.4" font-size="12.5" font-weight="bold" text-anchor="middle" fill="#fff" font-family="Liberation Sans, sans-serif">?</text></svg><svg style="left:1063px;top:462px" width="17" height="17" viewBox="0 0 17 17"><circle cx="10" cy="6.6" r="5.4" fill="#fff" stroke="#3F6FB0" stroke-width="1.4"/><path d="M6 10.6L1 15.6" stroke="#3F6FB0" stroke-width="2"/><path d="M10 5.8V9.6" stroke="#444" stroke-width="1.5"/><circle cx="10" cy="3.9" r="0.9" fill="#444"/></svg>
<span class="t" style="top:499px;font-size:15px;line-height:19px;color:#111;left:1056.00px;transform:scaleX(0.9359);">Das Suchfeld</span>
<span class="t" style="top:499px;font-size:15px;line-height:19px;color:#2B579A;font-weight:bold;-webkit-text-stroke:0.3px;left:1143.50px;transform:scaleX(0.9277);">Sie wünschen</span>
<span class="t" style="top:499px;font-size:15px;line-height:19px;color:#111;left:1240.50px;transform:scaleX(0.9799);">bringt Sie direkt zu Befehlen und Hilfe in Word.</span>
<span class="t" style="top:531px;font-size:15px;line-height:19px;color:#C00000;font-weight:bold;-webkit-text-stroke:0.3px;left:1056.00px;transform:scaleX(0.9274);">Probieren Sie es aus:</span>
<span class="t" style="top:531px;font-size:15px;line-height:19px;color:#111;left:1201.50px;transform:scaleX(0.9838);">Abrufen von Hilfe:</span>
<span class="t" style="top:564px;font-size:18.7px;line-height:23px;color:#2B579A;font-weight:bold;-webkit-text-stroke:0.3px;left:1085.50px;transform:scaleX(0.9619);">1.</span>
<span class="t" style="top:567px;font-size:15px;line-height:19px;color:#404040;left:1109.00px;transform:scaleX(0.9560);">Navigieren Sie oben im Fenster zu</span>
<span class="t" style="top:567px;font-size:15px;line-height:19px;color:#2B579A;font-weight:bold;-webkit-text-stroke:0.3px;left:1333.00px;transform:scaleX(0.9482);">Was möchten Sie tun?</span>
<span class="t" style="top:567px;font-size:15px;line-height:19px;color:#404040;left:1485.00px;transform:scaleX(0.8390);">.</span>
<span class="t" style="top:600px;font-size:18.7px;line-height:23px;color:#2B579A;font-weight:bold;-webkit-text-stroke:0.3px;left:1085.00px;transform:scaleX(0.9940);">2.</span>
<span class="t" style="top:603px;font-size:15px;line-height:19px;color:#404040;left:1109.00px;transform:scaleX(0.9440);">Geben Sie ein, was Sie tun möchten.</span>
<span class="t" style="top:635px;font-size:15px;line-height:19px;color:#111;left:1056.00px;transform:scaleX(0.9384);">Geben Sie beispielsweise ein:</span>
<div class="b" style="left:1056.6px;top:674.6px;width:5.3px;height:5.3px;background:#000;border-radius:50%;"></div>
<span class="t" style="top:667px;font-size:15px;line-height:19px;color:#2B579A;font-weight:bold;-webkit-text-stroke:0.3px;left:1080.00px;transform:scaleX(0.9496);">Wasserzeichen hinzufügen</span>
<span class="t" style="top:667px;font-size:15px;line-height:19px;color:#111;left:1262.60px;transform:scaleX(0.9578);">, um schnell zu den Befehlen für Wasserzeichen zu gelangen</span>
<div class="b" style="left:1056.6px;top:705.8000000000001px;width:5.3px;height:5.3px;background:#000;border-radius:50%;"></div>
<span class="t" style="top:698px;font-size:15px;line-height:19px;color:#2B579A;font-weight:bold;-webkit-text-stroke:0.3px;left:1080.00px;transform:scaleX(0.9934);">Hilfe</span>
<span class="t" style="top:698px;font-size:15px;line-height:19px;color:#111;left:1112.60px;transform:scaleX(0.9836);">, um zur Word-Hilfe zu gelangen</span>
<div class="b" style="left:1056.6px;top:737.8000000000001px;width:5.3px;height:5.3px;background:#000;border-radius:50%;"></div>
<span class="t" style="top:730px;font-size:15px;line-height:19px;color:#2B579A;font-weight:bold;-webkit-text-stroke:0.3px;left:1080.00px;transform:scaleX(0.9293);">Schulung</span>
<span class="t" style="top:730px;font-size:15px;line-height:19px;color:#111;left:1143.80px;transform:scaleX(0.9628);">, um die Liste der Word-Schulungskurse anzuzeigen</span>
<div class="b" style="left:1056.6px;top:769.8000000000001px;width:5.3px;height:5.3px;background:#000;border-radius:50%;"></div>
<span class="t" style="top:762px;font-size:15px;line-height:19px;color:#2B579A;font-weight:bold;-webkit-text-stroke:0.3px;left:1080.00px;transform:scaleX(0.9793);">Neuerungen</span>
<span class="t" style="top:762px;font-size:15px;line-height:19px;color:#111;left:1166.00px;transform:scaleX(0.9719);">, um eine Liste der aktuellsten Aktualisierungen von Word anzuzeigen</span>
<span class="t" style="top:809px;font-size:36px;line-height:43px;color:#3b3b3b;-webkit-text-stroke:0.8px #fff;left:1055.60px;transform:scaleX(0.8945);">Teilen Sie uns Ihre Meinung mit</span>
<div class="b" style="left:1054px;top:853px;width:606px;height:3px;background:#2B579A;"></div>
<span class="t" style="top:873px;font-size:15px;line-height:19px;color:#111;left:1056.00px;transform:scaleX(0.9828);">Bitte</span>
<span class="t" style="top:873px;font-size:15px;line-height:19px;color:#0563C1;text-decoration:underline;text-decoration-thickness:1px;text-underline-offset:2px;left:1089.50px;transform:scaleX(0.9502);">geben Sie uns Feedback zu dieser Vorlage</span>
<span class="t" style="top:873px;font-size:15px;line-height:19px;color:#111;left:1361.30px;transform:scaleX(0.9820);">, damit wir Inhalte bereitstellen können, die</span>
<span class="t" style="top:894px;font-size:15px;line-height:19px;color:#111;left:1056.00px;transform:scaleX(0.9714);">für Sie wirklich nützlich und hilfreich sind. Herzlichen Dank!</span>
<svg style="left:1529px;top:928px" width="125" height="90" viewBox="0 0 125 90" shape-rendering="crispEdges"><path d="M0 0h26v4h-26zM30 0h8v4h-8zM42 0h3v4h-3zM49 0h4v4h-4zM57 0h4v4h-4zM64 0h12v4h-12zM80 0h11v4h-11zM99 0h26v4h-26zM0 4h4v3h-4zM23 4h3v3h-3zM30 4h4v3h-4zM49 4h19v3h-19zM72 4h4v3h-4zM87 4h8v3h-8zM99 4h3v3h-3zM121 4h4v3h-4zM0 7h4v4h-4zM7 7h12v4h-12zM23 7h3v4h-3zM30 7h4v4h-4zM45 7h4v4h-4zM53 7h8v4h-8zM72 7h4v4h-4zM91 7h4v4h-4zM99 7h3v4h-3zM106 7h12v4h-12zM121 7h4v4h-4zM0 11h4v4h-4zM7 11h12v4h-12zM23 11h3v4h-3zM30 11h8v4h-8zM42 11h3v4h-3zM76 11h4v4h-4zM83 11h4v4h-4zM99 11h3v4h-3zM106 11h12v4h-12zM121 11h4v4h-4zM0 15h4v4h-4zM7 15h12v4h-12zM23 15h3v4h-3zM30 15h4v4h-4zM61 15h3v4h-3zM72 15h8v4h-8zM83 15h8v4h-8zM99 15h3v4h-3zM106 15h12v4h-12zM121 15h4v4h-4zM0 19h4v4h-4zM23 19h3v4h-3zM38 19h4v4h-4zM45 19h16v4h-16zM72 19h8v4h-8zM87 19h4v4h-4zM99 19h3v4h-3zM121 19h4v4h-4zM0 23h26v3h-26zM30 23h4v3h-4zM38 23h4v3h-4zM45 23h4v3h-4zM53 23h4v3h-4zM61 23h3v3h-3zM68 23h4v3h-4zM76 23h4v3h-4zM83 23h4v3h-4zM91 23h4v3h-4zM99 23h26v3h-26zM30 26h4v4h-4zM45 26h8v4h-8zM61 26h15v4h-15zM80 26h7v4h-7zM91 26h4v4h-4zM4 30h7v4h-7zM15 30h4v4h-4zM23 30h7v4h-7zM34 30h8v4h-8zM57 30h11v4h-11zM76 30h7v4h-7zM87 30h8v4h-8zM99 30h3v4h-3zM106 30h19v4h-19zM4 34h3v4h-3zM11 34h8v4h-8zM26 34h4v4h-4zM34 34h8v4h-8zM53 34h4v4h-4zM64 34h4v4h-4zM83 34h4v4h-4zM91 34h15v4h-15zM118 34h7v4h-7zM15 38h15v4h-15zM34 38h4v4h-4zM42 38h15v4h-15zM64 38h8v4h-8zM76 38h4v4h-4zM83 38h4v4h-4zM102 38h4v4h-4zM114 38h11v4h-11zM0 42h7v3h-7zM11 42h12v3h-12zM30 42h12v3h-12zM61 42h7v3h-7zM72 42h23v3h-23zM99 42h3v3h-3zM106 42h4v3h-4zM121 42h4v3h-4zM7 45h4v4h-4zM15 45h4v4h-4zM23 45h3v4h-3zM30 45h4v4h-4zM38 45h4v4h-4zM53 45h4v4h-4zM68 45h4v4h-4zM80 45h3v4h-3zM87 45h8v4h-8zM99 45h3v4h-3zM110 45h4v4h-4zM118 45h3v4h-3zM0 49h7v4h-7zM11 49h4v4h-4zM26 49h4v4h-4zM34 49h4v4h-4zM42 49h3v4h-3zM49 49h4v4h-4zM57 49h4v4h-4zM80 49h3v4h-3zM91 49h11v4h-11zM121 49h4v4h-4zM0 53h4v4h-4zM7 53h4v4h-4zM19 53h11v4h-11zM38 53h7v4h-7zM49 53h4v4h-4zM57 53h4v4h-4zM76 53h11v4h-11zM95 53h4v4h-4zM118 53h7v4h-7zM4 57h15v4h-15zM26 57h8v4h-8zM42 57h3v4h-3zM49 57h12v4h-12zM64 57h4v4h-4zM72 57h11v4h-11zM87 57h4v4h-4zM99 57h3v4h-3zM106 57h4v4h-4zM118 57h3v4h-3zM0 61h7v3h-7zM23 61h7v3h-7zM38 61h7v3h-7zM61 61h7v3h-7zM80 61h3v3h-3zM87 61h15v3h-15zM110 61h4v3h-4zM4 64h7v4h-7zM15 64h4v4h-4zM26 64h4v4h-4zM34 64h8v4h-8zM49 64h4v4h-4zM57 64h4v4h-4zM76 64h7v4h-7zM91 64h15v4h-15zM118 64h7v4h-7zM7 68h8v4h-8zM23 68h3v4h-3zM34 68h4v4h-4zM45 68h4v4h-4zM57 68h4v4h-4zM64 68h4v4h-4zM76 68h4v4h-4zM91 68h8v4h-8zM114 68h4v4h-4zM121 68h4v4h-4zM4 72h7v4h-7zM19 72h4v4h-4zM26 72h8v4h-8zM49 72h12v4h-12zM68 72h4v4h-4zM76 72h7v4h-7zM91 72h4v4h-4zM99 72h11v4h-11zM4 76h3v4h-3zM11 76h4v4h-4zM23 76h3v4h-3zM53 76h15v4h-15zM80 76h15v4h-15zM99 76h3v4h-3zM110 76h4v4h-4zM118 76h3v4h-3zM4 80h11v3h-11zM19 80h4v3h-4zM34 80h4v3h-4zM42 80h3v3h-3zM49 80h12v3h-12zM68 80h4v3h-4zM83 80h4v3h-4zM91 80h4v3h-4zM99 80h3v3h-3zM118 80h7v3h-7zM0 83h4v4h-4zM7 83h4v4h-4zM15 83h4v4h-4zM23 83h3v4h-3zM34 83h4v4h-4zM61 83h3v4h-3zM68 83h4v4h-4zM80 83h3v4h-3zM91 83h23v4h-23zM118 83h7v4h-7zM4 87h7v3h-7zM15 87h8v3h-8zM42 87h19v3h-19zM72 87h23v3h-23zM99 87h11v3h-11zM118 87h7v3h-7z" fill="#000"/></svg>
</body></html>
